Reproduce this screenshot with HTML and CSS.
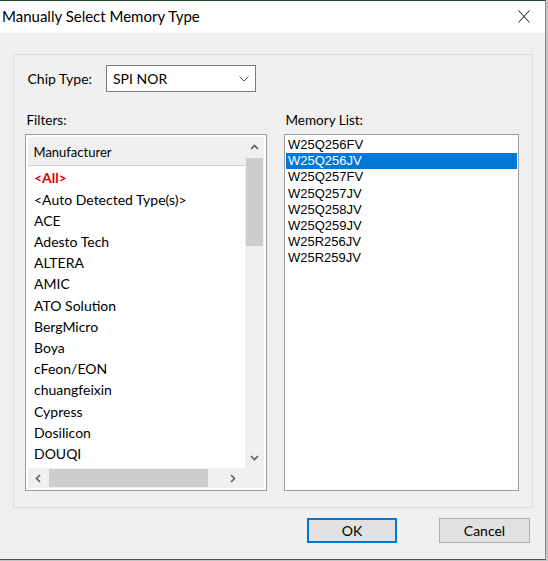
FILE: index.html
```
<!DOCTYPE html>
<html>
<head>
<meta charset="utf-8">
<title>Manually Select Memory Type</title>
<link rel="stylesheet" href="styles.css">
</head>
<body>
<div class="window">
  <div class="titlebar">
    <span class="title">Manually Select Memory Type</span>
    <svg class="close" width="12" height="13" viewBox="0 0 12 13"><path d="M0.5 0.5 L11.5 12.5 M11.5 0.5 L0.5 12.5" fill="none" stroke="#111" stroke-width="1"/></svg>
  </div>
  <div class="body">
    <div class="group">
      <div class="chip-row">
        <span class="chip-label">Chip Type:</span>
        <div class="combo">
          <span>SPI NOR</span>
          <svg width="10" height="6" viewBox="0 0 10 6"><path d="M0.5 0.5 L5 5 L9.5 0.5" fill="none" stroke="#555" stroke-width="1"/></svg>
        </div>
      </div>
      <div class="panels">
        <div class="panel panel-left">
          <div class="caption">Filters:</div>
          <div class="listview">
            <div class="lv-main">
              <div class="lv-header">Manufacturer</div>
              <ul class="lv-items">
                <li class="all">&lt;All&gt;</li>
                <li>&lt;Auto Detected Type(s)&gt;</li>
                <li>ACE</li>
                <li>Adesto Tech</li>
                <li>ALTERA</li>
                <li>AMIC</li>
                <li>ATO Solution</li>
                <li>BergMicro</li>
                <li>Boya</li>
                <li>cFeon/EON</li>
                <li>chuangfeixin</li>
                <li>Cypress</li>
                <li>Dosilicon</li>
                <li>DOUQI</li>
              </ul>
            </div>
            <div class="vscroll">
              <div class="sb-btn"><svg width="9" height="6" viewBox="0 0 9 6"><path d="M1 5 L4.5 1.5 L8 5" fill="none" stroke="#606060" stroke-width="1.7"/></svg></div>
              <div class="vthumb"></div>
              <div class="sb-space"></div>
              <div class="sb-btn"><svg width="9" height="6" viewBox="0 0 9 6"><path d="M1 1 L4.5 4.5 L8 1" fill="none" stroke="#606060" stroke-width="1.7"/></svg></div>
            </div>
            <div class="hscroll">
              <div class="sb-hbtn"><svg width="6" height="9" viewBox="0 0 6 9"><path d="M5 1 L1.5 4.5 L5 8" fill="none" stroke="#606060" stroke-width="1.7"/></svg></div>
              <div class="hthumb"></div>
              <div class="sb-space"></div>
              <div class="sb-hbtn sb-hbtn-right"><svg width="6" height="9" viewBox="0 0 6 9"><path d="M1 1 L4.5 4.5 L1 8" fill="none" stroke="#606060" stroke-width="1.7"/></svg></div>
            </div>
            <div class="corner"></div>
          </div>
        </div>
        <div class="panel panel-right">
          <div class="caption">Memory List:</div>
          <ul class="listbox">
            <li>W25Q256FV</li>
            <li class="selected">W25Q256JV</li>
            <li>W25Q257FV</li>
            <li>W25Q257JV</li>
            <li>W25Q258JV</li>
            <li>W25Q259JV</li>
            <li>W25R256JV</li>
            <li>W25R259JV</li>
          </ul>
        </div>
      </div>
    </div>
    <div class="buttons">
      <button class="btn btn-ok">OK</button>
      <button class="btn btn-cancel">Cancel</button>
    </div>
  </div>
</div>
</body>
</html>
```
FILE: styles.css
```
html, body {
  margin: 0;
  padding: 0;
}
body {
  background: #c4c4c4;
  font-family: Lato, "Noto Sans", sans-serif;
  color: #000;
}
.window {
  width: 546px;
  height: 560px;
  box-sizing: border-box;
  border-top: 1px solid #1d4b2b;
  border-right: 1px solid #8a8a8a;
  border-bottom: 1px solid #4a4a4a;
  background: #f0f0f0;
  display: flex;
  flex-direction: column;
}
.titlebar {
  height: 32px;
  flex: none;
  background: #fff;
  display: flex;
  justify-content: space-between;
  align-items: flex-start;
}
.title {
  font-size: 15px;
  line-height: 30px;
  padding-left: 2px;
}
.close {
  margin: 9px 15px 0 0;
}
.body {
  flex: 1;
  padding: 21px 0 0 13px;
}
.group {
  width: 520px;
  box-sizing: border-box;
  border: 1px solid #dcdcdc;
  padding: 10px 13px 16px 11px;
}
.chip-row {
  display: flex;
  align-items: center;
  height: 27px;
  margin-bottom: 20px;
  padding-left: 2.5px;
}
.chip-label {
  width: 78.5px;
  font-size: 14px;
  line-height: 17px;
}
.combo {
  width: 150px;
  height: 27px;
  box-sizing: border-box;
  border: 1px solid #7a7a7a;
  background: #fff;
  display: flex;
  align-items: center;
  justify-content: space-between;
  padding: 0 6px 0 6px;
  font-size: 14px;
}
.panels {
  display: flex;
  gap: 17px;
}
.panel-left {
  width: 242px;
}
.panel-right {
  width: 235px;
}
.caption {
  font-size: 13.5px;
  line-height: 16px;
  margin: 0 0 6px 1.5px;
}
.listview {
  height: 357px;
  box-sizing: border-box;
  border: 1px solid #9d9d9d;
  padding: 2px;
  background: #fff;
  display: grid;
  grid-template-columns: 1fr 19px;
  grid-template-rows: 1fr 20px;
}
.lv-main {
  display: flex;
  flex-direction: column;
  overflow: hidden;
  min-height: 0;
}
.lv-header {
  height: 28px;
  flex: none;
  background: #f0f0f0;
  border-bottom: 1px solid #d0d0d0;
  font-size: 13px;
  line-height: 30px;
  padding-left: 5.5px;
  overflow: hidden;
}
.lv-items {
  list-style: none;
  margin: 0;
  padding: 1.3px 0 0 6px;
  font-size: 14px;
  line-height: 21.2px;
  overflow: hidden;
  flex: 1;
  white-space: nowrap;
}
.lv-items .all {
  color: #e00000;
  font-weight: bold;
}
.vscroll {
  background: #f0f0f0;
  display: flex;
  flex-direction: column;
}
.sb-btn {
  height: 20px;
  flex: none;
  display: flex;
  align-items: center;
  justify-content: center;
}
.vthumb {
  height: 88px;
  margin: 0.7px 1px 0 1px;
  background: #cdcdcd;
  flex: none;
}
.sb-space {
  flex: 1;
}
.hscroll {
  background: #f0f0f0;
  display: flex;
}
.sb-hbtn {
  width: 20px;
  flex: none;
  display: flex;
  align-items: center;
  justify-content: center;
}
.sb-hbtn-right {
  justify-content: flex-start;
  padding-left: 5px;
  box-sizing: border-box;
}
.hthumb {
  width: 159px;
  margin: 1px 0 1px 1px;
  background: #cdcdcd;
  flex: none;
}
.corner {
  background: #f0f0f0;
}
.listbox {
  list-style: none;
  margin: 0;
  height: 357px;
  box-sizing: border-box;
  border: 1px solid #9d9d9d;
  padding: 1.5px 1px;
  background: #fff;
  font-family: "Liberation Sans", Arial, sans-serif;
  font-size: 13px;
}
.listbox li {
  padding: 1.6px 0 0 2px;
  line-height: 14.6px;
  white-space: nowrap;
}
.listbox .selected {
  background: #0078d7;
  color: #fff;
}
.buttons {
  display: flex;
  justify-content: flex-end;
  gap: 42px;
  padding-right: 15px;
  margin-top: 10px;
}
.btn {
  height: 25px;
  box-sizing: border-box;
  background: #e1e1e1;
  border: 1px solid #adadad;
  font-family: Lato, "Noto Sans", sans-serif;
  font-size: 14px;
  color: #000;
  padding: 0;
}
.btn-ok {
  width: 90px;
  border: 2px solid #0078d7;
}
.btn-cancel {
  width: 91px;
}
```
